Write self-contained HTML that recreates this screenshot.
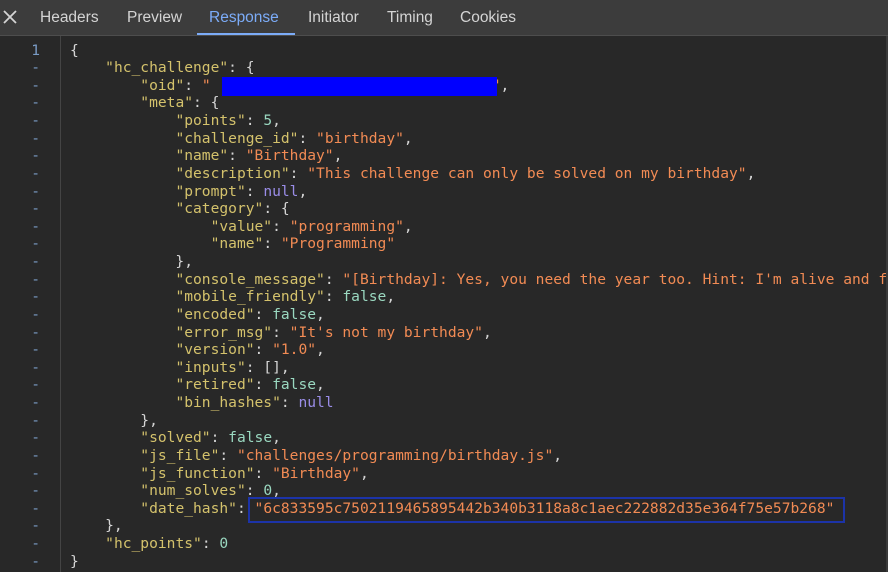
<!DOCTYPE html>
<html><head><meta charset="utf-8"><style>
html,body{margin:0;padding:0;width:888px;height:572px;overflow:hidden;background:#282828}
.tabs{position:absolute;left:0;top:0;width:888px;height:35px;background:#3c3c3c;border-bottom:1px solid #4d4d4d;font-family:"Liberation Sans",sans-serif;font-size:15.5px;color:#d4d4d4}
.tab{position:absolute;top:9px}
.act{color:#7cacf8}
.ul{position:absolute;left:197px;top:33px;width:98px;height:2px;background:#7cacf8}
.gut{position:absolute;left:0;top:36px;width:60px;height:536px;border-right:1px solid #444}
pre{margin:0;position:absolute;top:41.5px;font-family:"DejaVu Sans Mono",monospace;font-size:14.6px;line-height:17.63px}
.ln{left:0;width:40px;text-align:right;color:#7a9cc6}
.code{left:70px;color:#d6d6d6}
.k{color:#d4c26c}.s{color:#f28b54}.n{color:#9ad8c0}.u{color:#9a8de8}
.sb{position:absolute;left:886px;top:36px;width:2px;height:536px;background:#3a3a3a}
</style></head><body>
<div class="tabs">
<svg style="position:absolute;left:3px;top:10px" width="14" height="14" viewBox="0 0 14 14"><path d="M1 1L13 13M13 1L1 13" stroke="#d4d4d4" stroke-width="1.8"/></svg>
<span class="tab" style="left:40px">Headers</span>
<span class="tab" style="left:127px">Preview</span>
<span class="tab act" style="left:209px">Response</span>
<span class="tab" style="left:308px">Initiator</span>
<span class="tab" style="left:387px">Timing</span>
<span class="tab" style="left:460px">Cookies</span>
<div class="ul"></div>
</div>
<div class="gut"></div>
<div class="sb"></div>
<pre class="ln">1
-
-
-
-
-
-
-
-
-
-
-
-
-
-
-
-
-
-
-
-
-
-
-
-
-
-
-
-
-</pre>
<pre class="code">{
    <span class="k">"hc_challenge"</span>: {
        <span class="k">"oid"</span>: <span class="s">"                                "</span>,
        <span class="k">"meta"</span>: {
            <span class="k">"points"</span>: <span class="n">5</span>,
            <span class="k">"challenge_id"</span>: <span class="s">"birthday"</span>,
            <span class="k">"name"</span>: <span class="s">"Birthday"</span>,
            <span class="k">"description"</span>: <span class="s">"This challenge can only be solved on my birthday"</span>,
            <span class="k">"prompt"</span>: <span class="u">null</span>,
            <span class="k">"category"</span>: {
                <span class="k">"value"</span>: <span class="s">"programming"</span>,
                <span class="k">"name"</span>: <span class="s">"Programming"</span>
            },
            <span class="k">"console_message"</span>: <span class="s">"[Birthday]: Yes, you need the year too. Hint: I'm alive and f</span>
            <span class="k">"mobile_friendly"</span>: <span class="n">false</span>,
            <span class="k">"encoded"</span>: <span class="n">false</span>,
            <span class="k">"error_msg"</span>: <span class="s">"It's not my birthday"</span>,
            <span class="k">"version"</span>: <span class="s">"1.0"</span>,
            <span class="k">"inputs"</span>: [],
            <span class="k">"retired"</span>: <span class="n">false</span>,
            <span class="k">"bin_hashes"</span>: <span class="u">null</span>
        },
        <span class="k">"solved"</span>: <span class="n">false</span>,
        <span class="k">"js_file"</span>: <span class="s">"challenges/programming/birthday.js"</span>,
        <span class="k">"js_function"</span>: <span class="s">"Birthday"</span>,
        <span class="k">"num_solves"</span>: <span class="n">0</span>,
        <span class="k">"date_hash"</span>: <span class="s">"6c833595c7502119465895442b340b3118a8c1aec222882d35e364f75e57b268"</span>
    },
    <span class="k">"hc_points"</span>: <span class="n">0</span>
}</pre>
<div style="position:absolute;left:222px;top:77px;width:275px;height:19px;background:#0000ff"></div>
<div style="position:absolute;left:248px;top:497px;width:593px;height:22px;border:2px solid #1c33a8"></div>
</body></html>
